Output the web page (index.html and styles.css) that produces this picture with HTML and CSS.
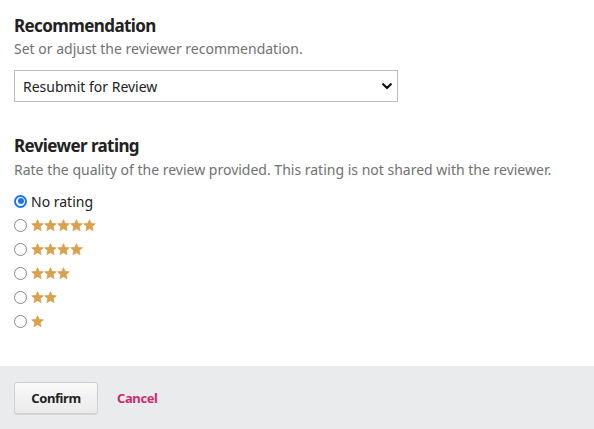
FILE: index.html
```html
<!DOCTYPE html>
<html>
<head>
<meta charset="utf-8">
<link rel="stylesheet" href="styles.css">
</head>
<body>
<svg width="0" height="0" class="defs">
  <defs>
    <symbol id="star" viewBox="0 0 24 24"><path d="M12 1.2 L15.1 8.2 L22.7 8.9 L17 14 L18.6 21.6 L12 17.7 L5.4 21.6 L7 14 L1.3 8.9 L8.9 8.2 Z" fill="#daa14c" stroke="#daa14c" stroke-width="1.4" stroke-linejoin="round"/></symbol>
  </defs>
</svg>
<div class="panel">
  <section class="section">
    <h2 class="title">Recommendation</h2>
    <p class="desc">Set or adjust the reviewer recommendation.</p>
    <div class="select">
      <span>Resubmit for Review</span>
      <svg class="chev" width="10" height="7" viewBox="0 0 10 7"><path d="M1.2 1.2 L5 5 L8.8 1.2" fill="none" stroke="#111" stroke-width="2.2" stroke-linecap="round" stroke-linejoin="round"/></svg>
    </div>
  </section>
  <section class="section rating">
    <h2 class="title">Reviewer rating</h2>
    <p class="desc">Rate the quality of the review provided. This rating is not shared with the reviewer.</p>
    <div class="options">
      <label class="opt"><span class="radio checked"></span><span class="label">No rating</span></label>
      <label class="opt"><span class="radio"></span><span class="stars"><svg class="star"><use href="#star"/></svg><svg class="star"><use href="#star"/></svg><svg class="star"><use href="#star"/></svg><svg class="star"><use href="#star"/></svg><svg class="star"><use href="#star"/></svg></span></label>
      <label class="opt"><span class="radio"></span><span class="stars"><svg class="star"><use href="#star"/></svg><svg class="star"><use href="#star"/></svg><svg class="star"><use href="#star"/></svg><svg class="star"><use href="#star"/></svg></span></label>
      <label class="opt"><span class="radio"></span><span class="stars"><svg class="star"><use href="#star"/></svg><svg class="star"><use href="#star"/></svg><svg class="star"><use href="#star"/></svg></span></label>
      <label class="opt"><span class="radio"></span><span class="stars"><svg class="star"><use href="#star"/></svg><svg class="star"><use href="#star"/></svg></span></label>
      <label class="opt"><span class="radio"></span><span class="stars"><svg class="star"><use href="#star"/></svg></span></label>
    </div>
  </section>
</div>
<div class="footer">
  <button class="btn">Confirm</button>
  <a class="cancel">Cancel</a>
</div>
</body>
</html>
```
FILE: styles.css
```css
html, body { margin: 0; padding: 0; background: #fff; }
body { font-family: "Noto Sans", "Open Sans", sans-serif; color: #222; width: 594px; height: 429px; overflow: hidden; }
.defs { position: absolute; width: 0; height: 0; }
.panel { padding: 14px 14px 0 14px; height: 352px; }
.section { margin: 0; }
.title { margin: 0; font-size: 17px; font-weight: 700; line-height: 24px; letter-spacing: -0.6px; color: #222; }
.desc { margin: 1px 0 0 0; font-size: 14px; line-height: 20px; color: #717171; }
.rating .desc { margin-top: 2px; }
.select { margin-top: 11px; width: 370px; height: 30px; border: 1px solid #bbb; display: flex; align-items: center; justify-content: space-between; padding: 0 4px 0 8px; font-size: 14px; color: #222; }
.chev { margin-right: 1px; }
.rating { margin-top: 32px; }
.options { margin-top: 9px; display: flex; flex-direction: column; }
.opt { display: flex; align-items: center; height: 24px; }
.radio { width: 11px; height: 11px; border: 1px solid #858585; border-radius: 50%; margin-right: 4px; flex: none; }
.radio.checked { border: 2px solid #1b74ee; width: 9px; height: 9px; position: relative; }
.radio.checked::after { content: ""; position: absolute; left: 1.5px; top: 1.5px; width: 6px; height: 6px; border-radius: 50%; background: #1b74ee; }
.label { font-size: 14px; color: #222; }
.stars { display: flex; }
.star { width: 13px; height: 13px; display: block; }
.footer { background: #eaebed; height: 63px; display: flex; align-items: center; padding: 0 14px; gap: 19px; }
.btn { width: 84px; height: 32px; border: 1px solid #cfcfcf; border-radius: 3px; background: linear-gradient(#f9f9f9, #ebebeb); font-family: inherit; font-size: 13px; font-weight: 700; letter-spacing: -0.4px; color: #222; box-shadow: 0 1px 0 #d6d6d6; padding: 0; }
.cancel { font-size: 13px; font-weight: 700; letter-spacing: -0.4px; color: #cf2a6a; }
```
